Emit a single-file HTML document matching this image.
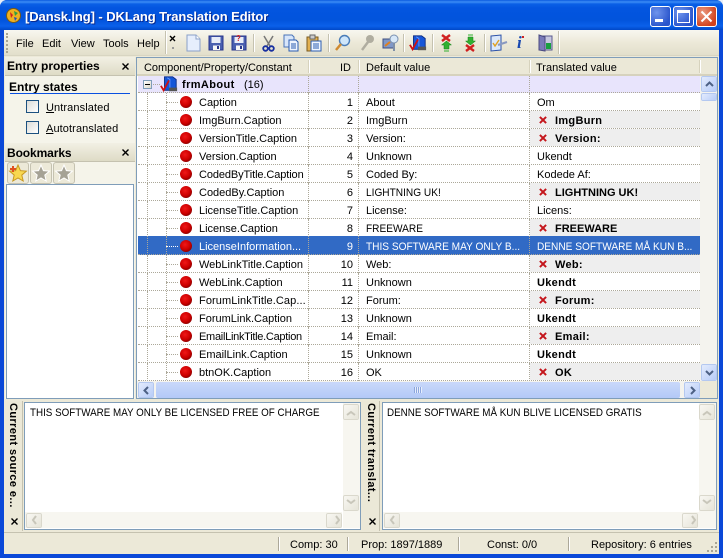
<!DOCTYPE html>
<html><head><meta charset="utf-8"><style>
html,body{margin:0;padding:0}
body{width:723px;height:558px;overflow:hidden;position:relative;background:#e8eef8;font:11px/13px "Liberation Sans",sans-serif;color:#000}
div,span,svg{position:absolute;box-sizing:border-box}
span{white-space:nowrap}
.title{left:0;top:0;width:723px;height:30px;background:linear-gradient(#0a5ae0 0,#3c8cf5 2px,#0a5fe6 4px,#0355e0 8px,#0254dc 20px,#0a60ea 26px,#0048c8 30px);border-radius:7px 7px 0 0}
.wb{top:6px;width:21px;height:21px;border:1px solid #fff;border-radius:3px;background:radial-gradient(circle at 30% 30%,#6f94ec,#2a55cc 75%)}
.hd{font-weight:bold;font-size:12px}
.u{transform-origin:0 50%;transform:scaleX(.92)}
.row{left:138px;width:562px;height:18px;border-bottom:1px dotted #aca899}
.row::before{content:"";position:absolute;left:28px;top:0;height:100%;border-left:1px dotted #aca899}
.row span{top:4px}
.c1{left:61px}.id{right:347px;width:30px;text-align:right}.d{left:228px}.t{left:399px}
.x{left:392px;width:170px;height:17px;background:#eeeeee}
.x span{top:4px;left:25px;font-weight:bold;letter-spacing:.3px}
.x svg{left:9px;top:5px;width:8px;height:8px}
.ball{left:42px;top:3px;width:12px;height:12px;border-radius:50%;background:radial-gradient(circle at 42% 38%,#f01818,#cc0000 50%,#5a0000 95%)}
.v{left:9px;top:0;height:18px;border-left:1px dotted #aca899}
.h{left:28px;top:9px;width:12px;border-top:1px dotted #aca899}
.cs{top:0;height:18px;border-left:1px dotted #aca899}
.sel{background:#316ac5;color:#fff}
.btn{background:linear-gradient(135deg,#e3ebfd,#b7ccf8);border:1px solid #fff;outline:1px solid #b4c8f0;outline-offset:-1px;border-radius:2px}
.dbtn{background:linear-gradient(135deg,#f8f7f2,#e6e4d8);border:1px solid #fff;outline:1px solid #dad8cc;outline-offset:-1px;border-radius:2px}
.memo{border:1px solid #7f9db9;background:#fff}
.sep{top:34px;width:2px;height:18px;border-left:1px solid #c5c2b0;border-right:1px solid #fff}
.cap{font-weight:bold;font-size:11px;letter-spacing:.4px;transform-origin:0 0;transform:rotate(90deg)}
.panelh{left:5px;width:130px;height:19px;background:linear-gradient(#f2f0e4,#dedbc6);border-bottom:1px solid #c5c2b0}
.st{top:539px}
.ss{top:537px;width:2px;height:14px;border-left:1px solid #aca899;border-right:1px solid #fff}
</style></head><body>
<svg width="0" height="0" style="left:0;top:0"><defs>
<symbol id="disk" viewBox="0 0 16 16"><path d="M1 1h14v14H1z" fill="#4a5fb0" stroke="#27348b"/><path d="M3.500 2h9v6h-9z" fill="#e8ecf8"/><path d="M5 10.500h7V15H5z" fill="#f6f6f6"/><path d="M9 11h2v3H9z" fill="#27348b"/></symbol>
<symbol id="star" viewBox="0 0 20 20"><path d="M10 2l2.400 5.600 6 .5-4.600 4 1.400 5.900L10 15l-5.200 3 1.400-5.900-4.600-4 6-.5z" fill="#a5a295" stroke="#fff"/></symbol>
<symbol id="rx" viewBox="0 0 9 9"><path d="M1 1l7 7M8 1L1 8" stroke="#c4161c" stroke-width="2.200" fill="none"/></symbol>
<symbol id="cl" viewBox="0 0 7 7"><path d="M.5 .5l6 6M6.500 .5l-6 6" stroke="#000" stroke-width="1.400" fill="none"/></symbol>
<symbol id="mbox" viewBox="0 0 20 20"><path d="M5 2h9l4 3v12H5z" fill="#1656d8" stroke="#0a2a80"/><path d="M8 3l3 2v10" stroke="#6a98ff" fill="none"/><path d="M10 14h9v4h-9z" fill="#555"/><path d="M1 12l3 5 6-11" stroke="#d01010" stroke-width="2" fill="none"/></symbol>
</defs></svg>

<div style="left:0;top:0;width:723px;height:558px;background:#0a48d8;border-radius:7px 7px 0 0"></div>
<div style="left:4px;top:30px;width:715px;height:524px;background:#ece9d8"></div>
<div class="title"></div>
<svg style="left:5px;top:7px" width="17" height="17" viewBox="0 0 17 17"><circle cx="8.500" cy="8.500" r="7" fill="#f0b020" stroke="#7a5a10"/><path d="M5 5l3 3-2 3z" fill="#d02020"/><path d="M9 4l4 2-3 3z" fill="#30a040"/><path d="M9 10l3 1-2 3z" fill="#2050c0"/></svg>
<span style="left:25px;top:9px;font:bold 13px/16px 'Liberation Sans',sans-serif;color:#fff;text-shadow:1px 1px 0 #0a2a90;letter-spacing:-.08px">[Dansk.lng] - DKLang Translation Editor</span>
<div class="wb" style="left:650px"><div style="left:4px;top:12px;width:8px;height:3px;background:#fff"></div></div>
<div class="wb" style="left:673px"><div style="left:3px;top:3px;width:13px;height:13px;border:1px solid #fff;border-top-width:3px"></div></div>
<div class="wb" style="left:696px;background:radial-gradient(circle at 30% 30%,#ea9a80,#d2411c 75%)"><svg style="left:3px;top:3px" width="13" height="13" viewBox="0 0 13 13"><path d="M1.500 1.500l10 10M11.500 1.500l-10 10" stroke="#fff" stroke-width="2"/></svg></div>

<!-- toolbar -->
<div style="left:4px;top:30px;width:715px;height:26px;background:linear-gradient(#f8f7f0,#ece9d8 50%,#e2dfcc);border-bottom:1px solid #d8d5c2"></div>
<div style="left:6px;top:33px;width:2px;height:20px;border-left:2px dotted #a8a594"></div>
<span style="left:16px;top:38px">File</span><span style="left:42px;top:38px">Edit</span><span style="left:71px;top:38px">View</span><span style="left:103px;top:38px">Tools</span><span style="left:137px;top:38px">Help</span>
<div class="sep" style="left:165px;top:31px;height:23px"></div>
<svg style="left:169px;top:35px" width="9" height="7" viewBox="0 0 9 7"><path d="M1 1l5 5M6 1L1 6" stroke="#000" stroke-width="1.400"/></svg>
<div style="left:172px;top:47px;width:2px;height:2px;background:#999"></div>
<svg style="left:186px;top:34px" width="15" height="18" viewBox="0 0 15 18"><path d="M1 1h9l4 4v12H1z" fill="#e6eefc" stroke="#8aa0c8"/><path d="M10 1v4h4" fill="#fff" stroke="#8aa0c8"/></svg>
<svg style="left:208px;top:35px" width="16" height="16"><use href="#disk"/></svg>
<svg style="left:231px;top:35px" width="16" height="16"><use href="#disk"/></svg>
<span style="left:236px;top:35px;font-size:8px;line-height:8px;color:#d02020;font-weight:bold">?</span>
<div class="sep" style="left:253px"></div>
<svg style="left:262px;top:35px" width="13" height="17" viewBox="0 0 13 17"><path d="M2 1l6 10M11 1L5 11" stroke="#777" stroke-width="1.500"/><circle cx="3.500" cy="13.500" r="2.300" fill="none" stroke="#1830a0" stroke-width="1.800"/><circle cx="9.500" cy="13.500" r="2.300" fill="none" stroke="#1830a0" stroke-width="1.800"/></svg>
<svg style="left:283px;top:34px" width="16" height="18" viewBox="0 0 16 18"><path d="M1 1h8l2 2v10H1z" fill="#d8e6fa" stroke="#4a74b8"/><path d="M6 6h7l2 2v9H6z" fill="#eef4fe" stroke="#2a5cb0"/><path d="M8 10h5M8 12h5M8 14h5" stroke="#2a5cb0"/></svg>
<svg style="left:306px;top:34px" width="16" height="18" viewBox="0 0 16 18"><path d="M1 3h11v14H1z" fill="#e2b050" stroke="#7a5a20"/><path d="M4 1h5v4H4z" fill="#ccc" stroke="#666"/><path d="M5 7h10v10H5z" fill="#f0f6ff" stroke="#2a5cb0"/><path d="M7 10h6M7 12h6M7 14h6" stroke="#2a5cb0"/></svg>
<div class="sep" style="left:328px"></div>
<svg style="left:334px;top:34px" width="17" height="18" viewBox="0 0 17 18"><circle cx="10.500" cy="6.500" r="5" fill="#cfe6fa" stroke="#4a7cb8" stroke-width="1.400"/><path d="M7 10l-5 6" stroke="#d08a30" stroke-width="2.500"/></svg>
<svg style="left:360px;top:34px" width="15" height="18" viewBox="0 0 15 18"><circle cx="10" cy="5" r="4" fill="#b0ada0"/><path d="M8 8l-6 8" stroke="#b0ada0" stroke-width="2.500"/></svg>
<svg style="left:382px;top:34px" width="17" height="18" viewBox="0 0 17 18"><path d="M1 5h11v9H1z" fill="#8098c8" stroke="#405080"/><circle cx="12" cy="5" r="4" fill="#d8e8f8" stroke="#7a90b0"/><path d="M3 12l5-4" stroke="#e08020" stroke-width="2"/><path d="M12 9v8" stroke="#8090a8" stroke-width="2"/></svg>
<div class="sep" style="left:403px"></div>
<svg style="left:409px;top:34px" width="18" height="18" viewBox="0 0 20 20"><use href="#mbox"/></svg>
<div class="sep" style="left:432px"></div>
<svg style="left:440px;top:34px" width="13" height="18" viewBox="0 0 13 18"><path d="M2 1l8 6M10 1L2 7" stroke="#d02020" stroke-width="2.400"/><path d="M6.500 7l5 4H9v4H4v-4H1.500z" fill="#30b030" stroke="#188018" stroke-width=".5"/><path d="M4 17h5" stroke="#30b030"/></svg>
<svg style="left:464px;top:34px" width="13" height="18" viewBox="0 0 13 18"><path d="M4 1h5" stroke="#30b030"/><path d="M4 3h5v4h2.500l-5 4-5-4H4z" fill="#30b030" stroke="#188018" stroke-width=".5"/><path d="M2 11l8 6M10 11l-8 6" stroke="#d02020" stroke-width="2.400"/></svg>
<div class="sep" style="left:484px"></div>
<svg style="left:490px;top:34px" width="18" height="18" viewBox="0 0 18 18"><path d="M1 2l10-1v15L1 17z" fill="#dbe8fa" stroke="#2a50a8"/><path d="M3 9l2 3 4-6" stroke="#e0a020" stroke-width="1.400" fill="none"/><path d="M8 11l9-3" stroke="#8898c0" stroke-width="2"/></svg>
<span style="left:517px;top:33px;font:italic bold 17px/20px 'Liberation Serif',serif;color:#1848b0">i</span>
<div style="left:522px;top:36px;width:2px;height:2px;background:#d02020"></div>
<svg style="left:538px;top:34px" width="15" height="18" viewBox="0 0 15 18"><path d="M1 2h13v14H1z" fill="#c8c8e0" stroke="#5a5a90"/><path d="M1 1l6 2v14l-6-1z" fill="#7a7ab8" stroke="#4a4a80"/><path d="M8 9h5v6H8z" fill="#18a040"/></svg>
<div class="sep" style="left:558px;top:31px;height:23px"></div>

<!-- left panel -->
<div style="left:5px;top:57px;width:130px;height:342px;background:#f5f4ea"></div>
<div class="panelh" style="top:57px"></div>
<span class="hd" style="left:7px;top:60px">Entry properties</span>
<svg style="left:122px;top:63px" width="7" height="7"><use href="#cl"/></svg>
<span class="hd" style="left:9px;top:81px">Entry states</span>
<div style="left:10px;top:93px;width:120px;height:1px;background:#0a50e0"></div>
<div style="left:26px;top:100px;width:13px;height:13px;border:1px solid #1c5180;background:linear-gradient(135deg,#dcdcd7,#fff)"></div>
<div style="left:26px;top:121px;width:13px;height:13px;border:1px solid #1c5180;background:linear-gradient(135deg,#dcdcd7,#fff)"></div>
<span style="left:46px;top:102px;letter-spacing:.1px"><u>U</u>ntranslated</span>
<span style="left:46px;top:123px;letter-spacing:.1px"><u>A</u>utotranslated</span>
<div class="panelh" style="top:143px"></div>
<span class="hd" style="left:7px;top:147px;letter-spacing:-.1px">Bookmarks</span>
<svg style="left:122px;top:149px" width="7" height="7"><use href="#cl"/></svg>
<div style="left:7px;top:162px;width:22px;height:22px;background:#ece9d8;border:1px solid #c5c2b0;border-radius:3px"></div>
<div style="left:30px;top:162px;width:22px;height:22px;background:#ece9d8;border:1px solid #c5c2b0;border-radius:3px"></div>
<div style="left:53px;top:162px;width:22px;height:22px;background:#ece9d8;border:1px solid #c5c2b0;border-radius:3px"></div>
<svg style="left:8px;top:163px" width="20" height="20" viewBox="0 0 20 20"><path d="M10 2l2.400 5.600 6 .5-4.600 4 1.400 5.900L10 15l-5.200 3 1.400-5.900-4.600-4 6-.5z" fill="#f8d850" stroke="#c89820"/><path d="M2 6h6M5 3v6" stroke="#e05020" stroke-width="2"/></svg>
<svg style="left:31px;top:163px" width="20" height="20"><use href="#star"/></svg>
<svg style="left:54px;top:163px" width="20" height="20"><use href="#star"/></svg>
<div class="memo" style="left:6px;top:184px;width:128px;height:215px"></div>

<!-- grid -->
<div style="left:136px;top:57px;width:582px;height:342px;border:1px solid #7f9db9;background:#fff"></div>
<div style="left:137px;top:58px;width:580px;height:18px;background:#ebe8d7;border-bottom:2px solid #d6d2bd"></div>
<span style="left:144px;top:62px;letter-spacing:-.03px">Component/Property/Constant</span>
<span style="left:340px;top:62px">ID</span>
<span style="left:366px;top:62px">Default value</span>
<span style="left:536px;top:62px">Translated value</span>
<div style="left:308px;top:60px;width:2px;height:13px;background:#fff;border-left:1px solid #d6d2bd"></div>
<div style="left:358px;top:60px;width:2px;height:13px;background:#fff;border-left:1px solid #d6d2bd"></div>
<div style="left:529px;top:60px;width:2px;height:13px;background:#fff;border-left:1px solid #d6d2bd"></div>
<div style="left:699px;top:60px;width:2px;height:13px;background:#fff;border-left:1px solid #d6d2bd"></div>
<div style="left:138px;top:76px;width:562px;height:17px;background:#e8e4fc;border-bottom:1px dotted #aca899"></div>
<div style="left:143px;top:80px;width:9px;height:9px;border:1px solid #7f9db9;background:linear-gradient(135deg,#fff,#dcd8c8)"><div style="left:1px;top:3px;width:5px;height:1px;background:#000"></div></div>
<div style="left:153px;top:84px;width:7px;border-top:1px dotted #aca899"></div>
<svg style="left:160px;top:75px" width="18" height="18" viewBox="0 0 20 20"><use href="#mbox"/></svg>
<span style="left:182px;top:79px;font-weight:bold;letter-spacing:.4px">frmAbout</span>
<span style="left:244px;top:79px">(16)</span>
<div class="cs" style="left:308px;top:76px;height:17px"></div><div class="cs" style="left:358px;top:76px;height:17px"></div><div class="cs" style="left:529px;top:76px;height:17px"></div>

<div class="row" style="top:93px"><div class="v"></div><div class="h"></div><div class="ball"></div><span class="c1">Caption</span><div class="cs" style="left:170px"></div><div class="cs" style="left:220px"></div><span class="id">1</span><span class="d">About</span><div class="cs" style="left:391px"></div><span class="t">Om</span></div>
<div class="row" style="top:111px"><div class="v"></div><div class="h"></div><div class="ball"></div><span class="c1">ImgBurn.Caption</span><div class="cs" style="left:170px"></div><div class="cs" style="left:220px"></div><span class="id">2</span><span class="d">ImgBurn</span><div class="cs" style="left:391px"></div><div class="x"><svg width="9" height="9"><use href="#rx"/></svg><span>ImgBurn</span></div></div>
<div class="row" style="top:129px"><div class="v"></div><div class="h"></div><div class="ball"></div><span class="c1">VersionTitle.Caption</span><div class="cs" style="left:170px"></div><div class="cs" style="left:220px"></div><span class="id">3</span><span class="d">Version:</span><div class="cs" style="left:391px"></div><div class="x"><svg width="9" height="9"><use href="#rx"/></svg><span>Version:</span></div></div>
<div class="row" style="top:147px"><div class="v"></div><div class="h"></div><div class="ball"></div><span class="c1">Version.Caption</span><div class="cs" style="left:170px"></div><div class="cs" style="left:220px"></div><span class="id">4</span><span class="d">Unknown</span><div class="cs" style="left:391px"></div><span class="t">Ukendt</span></div>
<div class="row" style="top:165px"><div class="v"></div><div class="h"></div><div class="ball"></div><span class="c1" style="letter-spacing:-.1px">CodedByTitle.Caption</span><div class="cs" style="left:170px"></div><div class="cs" style="left:220px"></div><span class="id">5</span><span class="d">Coded By:</span><div class="cs" style="left:391px"></div><span class="t">Kodede Af:</span></div>
<div class="row" style="top:183px"><div class="v"></div><div class="h"></div><div class="ball"></div><span class="c1">CodedBy.Caption</span><div class="cs" style="left:170px"></div><div class="cs" style="left:220px"></div><span class="id">6</span><span class="d u">LIGHTNING UK!</span><div class="cs" style="left:391px"></div><div class="x"><svg width="9" height="9"><use href="#rx"/></svg><span style="letter-spacing:0">LIGHTNING UK!</span></div></div>
<div class="row" style="top:201px"><div class="v"></div><div class="h"></div><div class="ball"></div><span class="c1">LicenseTitle.Caption</span><div class="cs" style="left:170px"></div><div class="cs" style="left:220px"></div><span class="id">7</span><span class="d">License:</span><div class="cs" style="left:391px"></div><span class="t">Licens:</span></div>
<div class="row" style="top:219px"><div class="v"></div><div class="h"></div><div class="ball"></div><span class="c1">License.Caption</span><div class="cs" style="left:170px"></div><div class="cs" style="left:220px"></div><span class="id">8</span><span class="d u">FREEWARE</span><div class="cs" style="left:391px"></div><div class="x"><svg width="9" height="9"><use href="#rx"/></svg><span style="letter-spacing:0">FREEWARE</span></div></div>
<div class="row sel" style="top:236px;height:19px"><div class="v" style="height:19px"></div><div class="h" style="border-color:#fff;top:10px"></div><div class="ball" style="top:4px"></div><span class="c1" style="top:5px">LicenseInformation...</span><div class="cs" style="left:170px;height:19px"></div><div class="cs" style="left:220px;height:19px"></div><span class="id" style="top:5px">9</span><span class="d u" style="top:5px">THIS SOFTWARE MAY ONLY B...</span><div class="cs" style="left:391px;height:19px"></div><span class="t u" style="top:5px">DENNE SOFTWARE MÅ KUN B...</span></div>
<div class="row" style="top:255px"><div class="v"></div><div class="h"></div><div class="ball"></div><span class="c1">WebLinkTitle.Caption</span><div class="cs" style="left:170px"></div><div class="cs" style="left:220px"></div><span class="id">10</span><span class="d">Web:</span><div class="cs" style="left:391px"></div><div class="x"><svg width="9" height="9"><use href="#rx"/></svg><span>Web:</span></div></div>
<div class="row" style="top:273px"><div class="v"></div><div class="h"></div><div class="ball"></div><span class="c1">WebLink.Caption</span><div class="cs" style="left:170px"></div><div class="cs" style="left:220px"></div><span class="id">11</span><span class="d">Unknown</span><div class="cs" style="left:391px"></div><span class="t" style="font-weight:bold;letter-spacing:.3px">Ukendt</span></div>
<div class="row" style="top:291px"><div class="v"></div><div class="h"></div><div class="ball"></div><span class="c1" style="letter-spacing:.1px">ForumLinkTitle.Cap...</span><div class="cs" style="left:170px"></div><div class="cs" style="left:220px"></div><span class="id">12</span><span class="d">Forum:</span><div class="cs" style="left:391px"></div><div class="x"><svg width="9" height="9"><use href="#rx"/></svg><span>Forum:</span></div></div>
<div class="row" style="top:309px"><div class="v"></div><div class="h"></div><div class="ball"></div><span class="c1">ForumLink.Caption</span><div class="cs" style="left:170px"></div><div class="cs" style="left:220px"></div><span class="id">13</span><span class="d">Unknown</span><div class="cs" style="left:391px"></div><span class="t" style="font-weight:bold;letter-spacing:.3px">Ukendt</span></div>
<div class="row" style="top:327px"><div class="v"></div><div class="h"></div><div class="ball"></div><span class="c1" style="letter-spacing:-.28px">EmailLinkTitle.Caption</span><div class="cs" style="left:170px"></div><div class="cs" style="left:220px"></div><span class="id">14</span><span class="d">Email:</span><div class="cs" style="left:391px"></div><div class="x"><svg width="9" height="9"><use href="#rx"/></svg><span>Email:</span></div></div>
<div class="row" style="top:345px"><div class="v"></div><div class="h"></div><div class="ball"></div><span class="c1">EmailLink.Caption</span><div class="cs" style="left:170px"></div><div class="cs" style="left:220px"></div><span class="id">15</span><span class="d">Unknown</span><div class="cs" style="left:391px"></div><span class="t" style="font-weight:bold;letter-spacing:.3px">Ukendt</span></div>
<div class="row" style="top:363px"><div class="v"></div><div class="h"></div><div class="ball"></div><span class="c1">btnOK.Caption</span><div class="cs" style="left:170px"></div><div class="cs" style="left:220px"></div><span class="id">16</span><span class="d">OK</span><div class="cs" style="left:391px"></div><div class="x"><svg width="9" height="9"><use href="#rx"/></svg><span>OK</span></div></div>

<!-- grid vertical scrollbar -->
<div style="left:700px;top:76px;width:17px;height:305px;background:#f4f3ee"></div>
<div class="btn" style="left:701px;top:76px;width:16px;height:16px"><svg style="left:3px;top:4px" width="9" height="6" viewBox="0 0 9 6"><path d="M1 5l3.500-3.500L8 5" stroke="#4d6185" stroke-width="2" fill="none"/></svg></div>
<div class="btn" style="left:701px;top:93px;width:16px;height:8px"></div>
<div class="btn" style="left:701px;top:364px;width:16px;height:17px"><svg style="left:3px;top:5px" width="9" height="6" viewBox="0 0 9 6"><path d="M1 1l3.500 3.500L8 1" stroke="#4d6185" stroke-width="2" fill="none"/></svg></div>
<!-- grid horizontal scrollbar -->
<div style="left:137px;top:381px;width:580px;height:17px;background:#f4f3ee"></div>
<div class="btn" style="left:138px;top:382px;width:16px;height:16px"><svg style="left:4px;top:3px" width="6" height="9" viewBox="0 0 6 9"><path d="M5 1L1.500 4.500 5 8" stroke="#4d6185" stroke-width="2" fill="none"/></svg></div>
<div style="left:156px;top:382px;width:524px;height:16px;background:linear-gradient(#c9d8fa,#b3c9f7);border-radius:2px"></div>
<div style="left:414px;top:387px;width:8px;height:6px;background:repeating-linear-gradient(90deg,#8da6dd 0 1px,#e6eefc 1px 2px)"></div>
<div class="btn" style="left:684px;top:382px;width:16px;height:16px"><svg style="left:5px;top:3px" width="6" height="9" viewBox="0 0 6 9"><path d="M1 1l3.500 3.500L1 8" stroke="#4d6185" stroke-width="2" fill="none"/></svg></div>
<div style="left:700px;top:381px;width:17px;height:17px;background:#ece9d8"></div>

<!-- bottom -->
<div style="left:5px;top:401px;width:18px;height:130px;background:#ebe8d7;border-right:1px solid #c5c2b0"></div>
<div style="left:362px;top:401px;width:18px;height:130px;background:#ebe8d7;border-right:1px solid #c5c2b0"></div>
<span class="cap" style="left:19px;top:403px">Current source e...</span>
<span class="cap" style="left:377px;top:403px">Current translat...</span>
<svg style="left:11px;top:518px" width="7" height="7"><use href="#cl"/></svg>
<svg style="left:369px;top:518px" width="7" height="7"><use href="#cl"/></svg>
<div class="memo" style="left:24px;top:402px;width:337px;height:128px"></div>
<span class="u" style="left:30px;top:407px;transform:scaleX(.892)">THIS SOFTWARE MAY ONLY BE LICENSED FREE OF CHARGE</span>
<div class="memo" style="left:382px;top:402px;width:335px;height:128px"></div>
<span class="u" style="left:387px;top:407px;transform:scaleX(.894)">DENNE SOFTWARE MÅ KUN BLIVE LICENSED GRATIS</span>

<div style="left:25px;top:512px;width:317px;height:16px;background:#f7f6f0"></div>
<div style="left:343px;top:403px;width:17px;height:125px;background:#f7f6f0"></div>
<div class="dbtn" style="left:26px;top:513px;width:16px;height:15px"></div>
<div class="dbtn" style="left:326px;top:513px;width:16px;height:15px"></div>
<div class="dbtn" style="left:343px;top:404px;width:16px;height:16px"></div>
<div class="dbtn" style="left:343px;top:495px;width:16px;height:16px"></div>
<div style="left:383px;top:512px;width:316px;height:16px;background:#f7f6f0"></div>
<div style="left:699px;top:403px;width:17px;height:125px;background:#f7f6f0"></div>
<div class="dbtn" style="left:384px;top:513px;width:16px;height:15px"></div>
<div class="dbtn" style="left:682px;top:513px;width:16px;height:15px"></div>
<div class="dbtn" style="left:699px;top:404px;width:16px;height:16px"></div>
<div class="dbtn" style="left:699px;top:495px;width:16px;height:16px"></div>
<svg style="left:0;top:0" width="723" height="558" fill="none" stroke="#c8c6ba" stroke-width="2"><path d="M36 516l-3 4 3 4M336 516l3 4-3 4M347 415l4-3 4 3M347 500l4 3 4-3M394 516l-3 4 3 4M692 516l3 4-3 4M703 415l4-3 4 3M703 500l4 3 4-3"/></svg>

<!-- status -->
<div style="left:4px;top:532px;width:715px;height:22px;background:#ece9d8;border-top:1px solid #c5c2b0"></div>
<div class="ss" style="left:278px"></div><div class="ss" style="left:347px"></div><div class="ss" style="left:458px"></div><div class="ss" style="left:568px"></div>
<span class="st" style="left:290px">Comp: 30</span>
<span class="st" style="left:361px">Prop: 1897/1889</span>
<span class="st" style="left:487px">Const: 0/0</span>
<span class="st" style="left:591px">Repository: 6 entries</span>
<svg style="left:707px;top:542px" width="11" height="11" fill="#a8a594"><path d="M8 0h2v2H8zM4 4h2v2H4zM8 4h2v2H8zM0 8h2v2H0zM4 8h2v2H4zM8 8h2v2H8z"/></svg>
</body></html>
